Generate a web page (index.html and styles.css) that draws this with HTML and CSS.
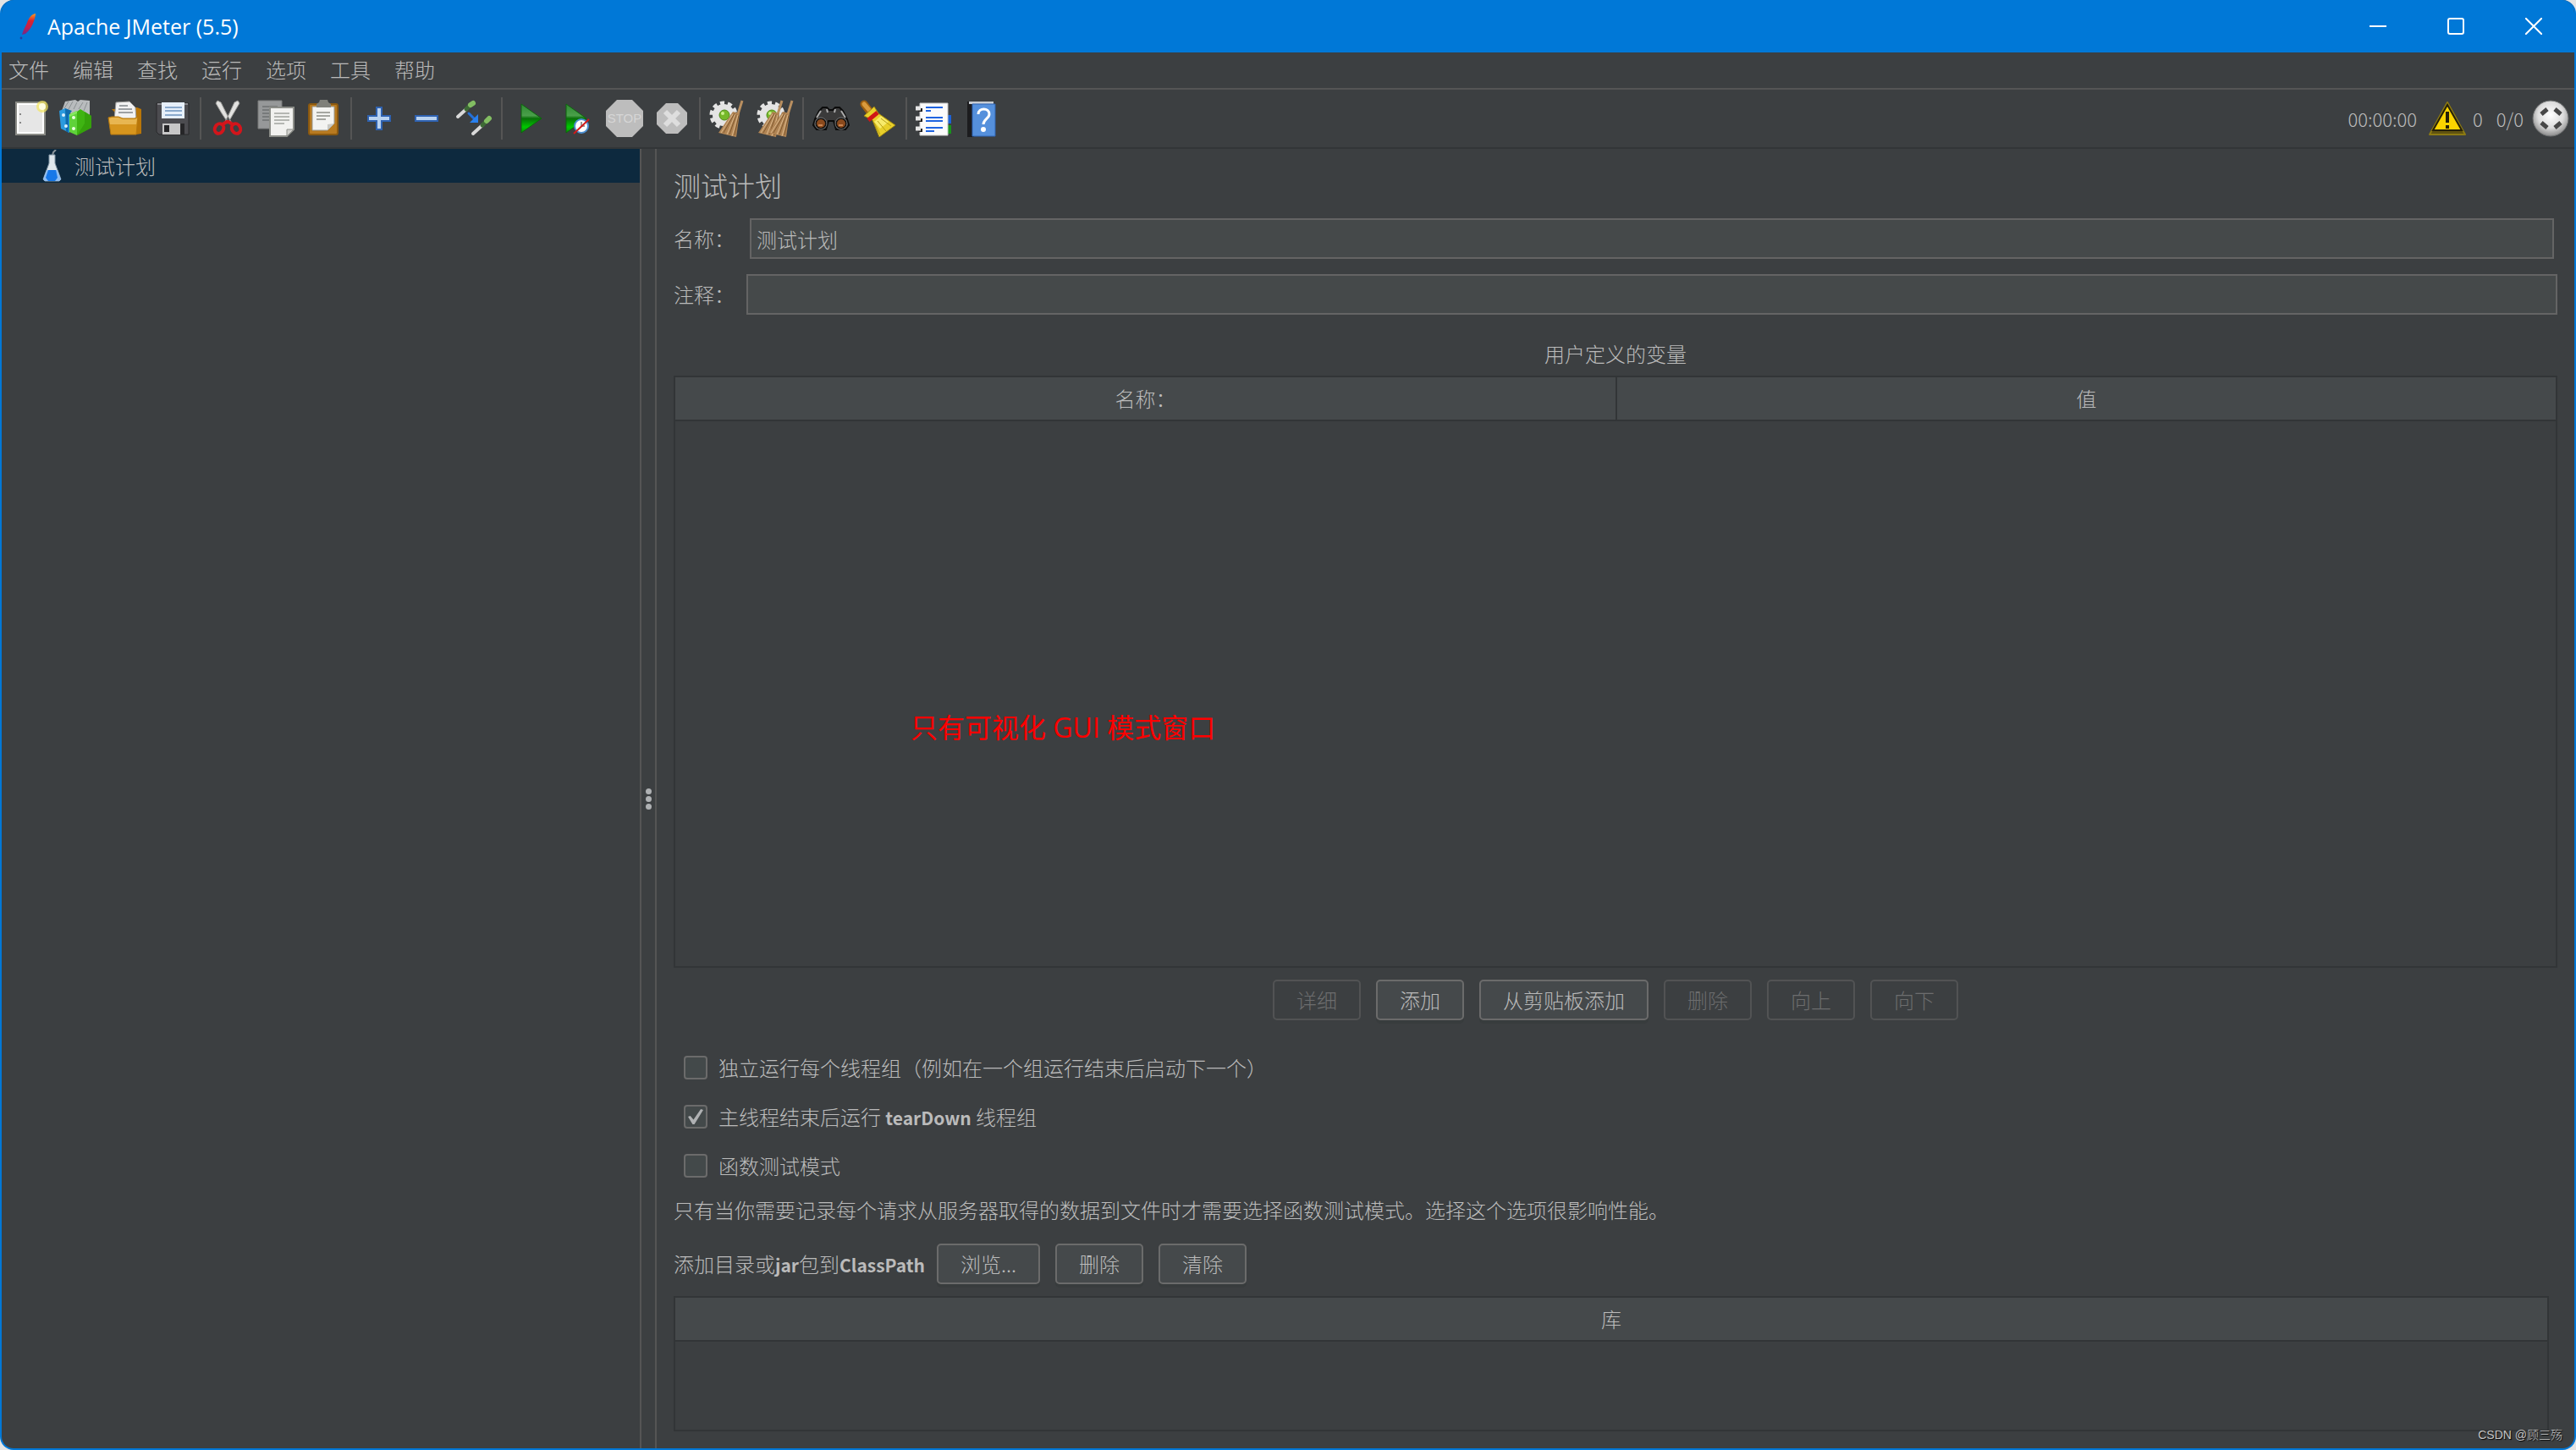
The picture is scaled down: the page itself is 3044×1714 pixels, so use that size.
FILE: index.html
```html
<!DOCTYPE html>
<html lang="zh-CN">
<head>
  <meta charset="UTF-8">
  <meta name="viewport" content="width=device-width, initial-scale=1.0">
  <title>Apache JMeter (5.5)</title>
  <link rel="stylesheet" href="styles.css">
</head>
<body>

<div class="window">
  <header class="titlebar">
    <svg class="feather" viewBox="0 0 22 34">
      <defs>
        <linearGradient id="feather" x1="0" y1="1" x2="0" y2="0">
          <stop offset="0" stop-color="#6d2a8c"/>
          <stop offset=".35" stop-color="#c2204f"/>
          <stop offset=".65" stop-color="#d8232f"/>
          <stop offset="1" stop-color="#f79a23"/>
        </linearGradient>
      </defs>
      <path fill="url(#feather)" d="M20 2c-5 1-8 5-10 11-2 5-5 9-6 14l4-1c5-4 8-9 10-15 1-3 2-6 2-9z"/>
      <circle cx="3" cy="31" r="1.4" fill="#2a3ea0"/>
    </svg>
    <span class="title">Apache JMeter (5.5)</span>
    <div class="window-buttons">
      <button type="button" aria-label="最小化"><svg viewBox="0 0 20 20"><path d="M0 10h20"/></svg></button>
      <button type="button" aria-label="最大化"><svg viewBox="0 0 20 20"><rect x="1" y="1" width="18" height="18" rx="2"/></svg></button>
      <button type="button" aria-label="关闭"><svg viewBox="0 0 20 20"><path d="M0 0l20 20M20 0L0 20"/></svg></button>
    </div>
  </header>

  <nav class="menubar">
    <button type="button">文件</button>
    <button type="button">编辑</button>
    <button type="button">查找</button>
    <button type="button">运行</button>
    <button type="button">选项</button>
    <button type="button">工具</button>
    <button type="button">帮助</button>
  </nav>

  <div class="toolbar">
    <div class="tools">
      <button type="button" aria-label="新建">
        <svg viewBox="0 0 44 44">
          <path fill="#e6e6e6" stroke="#8a8b86" stroke-width="2" d="M5 3h34v38H5z"/>
          <path fill="none" stroke="#fff" stroke-width="2" d="M7 5h30v34H7z"/>
          <path stroke="#888" stroke-width="2" d="M9 17h2M9 27h2"/>
          <circle cx="36" cy="8" r="7" fill="#f4e55c" opacity=".7"/>
          <circle cx="36" cy="8" r="4" fill="#fffde0"/>
        </svg>
      </button>
      <button type="button" aria-label="模板">
        <svg viewBox="0 0 44 44">
          <path fill="#b9bcbe" d="M3 13L7 2l12-2 3 2 3-2 11 1v17L18 17z"/>
          <path stroke="#8b9092" stroke-width="1" fill="none" d="M6 10l5-8M11 11l5-9M17 11l4-8M23 11l5-8M29 13l4-10"/>
          <path fill="#2a9ade" d="M0 13l7-3 5 3v26L2 34z"/>
          <path fill="#0f6cae" d="M7 10l8 3-4 5v21l-3-2z"/>
          <path fill="#5fd23a" d="M12 17l9-4v29l-9-4z"/>
          <path fill="#3fb412" d="M21 14l4-3 13 8v14l-17 9z"/>
          <path fill="#2f9606" d="M30 14l8 5v14l-17 9 9-14z" opacity=".6"/>
          <path fill="#86e860" d="M12 17l9-4v3l-9 4z"/>
          <circle cx="5" cy="18" r="2" fill="#d8eefc"/><circle cx="8" cy="31" r="2" fill="#d8eefc"/>
          <circle cx="17" cy="21" r="2" fill="#eaffdf"/><circle cx="17" cy="34" r="2" fill="#eaffdf"/>
        </svg>
      </button>
      <button type="button" aria-label="打开">
        <svg viewBox="0 0 44 44">
          <path fill="#b97608" d="M6 11h8v-2h22l5 2v29l-6 1z"/>
          <path fill="#f2f2f2" stroke="#9a9a98" stroke-width="1" d="M11 3l16-1 7 7 1 14H9z"/>
          <path stroke="#9da1a4" stroke-width="2" d="M15 7h10M14 11h16M14 15h17"/>
          <path fill="#d6951d" stroke="#b87a10" stroke-width="1" d="M2 21l4-1h8l5 2h14l4-2-2 21H5z"/>
          <path fill="#f0c468" d="M3 22l3-1h8l5 2h14l3-1-1 7H4z" opacity=".7"/>
        </svg>
      </button>
      <button type="button" aria-label="保存">
        <svg viewBox="0 0 44 44">
          <path fill="#4c4c50" stroke="#28282a" stroke-width="1" d="M3 4h38v37H6l-3-3z"/>
          <path fill="#85858a" d="M4 4h36v2H4z"/>
          <path fill="#e6effa" d="M9 3h27v19H9z"/>
          <path stroke="#8aa9cc" stroke-width="2" d="M13 9h20M13 13h20M13 18h20"/>
          <path fill="#c7c7c7" d="M10 28h21v13H10z"/>
          <path fill="#262628" d="M12 30h6v8h-6zM31 28h5v13h-5z"/>
        </svg>
      </button>
      <span class="separator"></span>
      <button type="button" aria-label="剪切">
        <svg viewBox="0 0 44 44">
          <path fill="#e2e2e0" stroke="#9b9b98" d="M9 1l4 2 8 16 4 7-3 2-8-12-7-12zM33 1l-4 2-7 15-4 8 3 2 7-12 7-12z"/>
          <g fill="none" stroke="#d3151b" stroke-width="4">
            <ellipse cx="11" cy="34" rx="5" ry="6" transform="rotate(30 11 34)"/>
            <ellipse cx="31" cy="34" rx="5" ry="6" transform="rotate(-30 31 34)"/>
            <path d="M15 29l5-3h2l5 3"/>
          </g>
          <circle cx="21" cy="23" r="1" fill="#666"/>
        </svg>
      </button>
      <button type="button" aria-label="复制">
        <svg viewBox="0 0 44 44">
          <path fill="#969899" stroke="#7a7c7d" d="M1 1h28v33H1z"/>
          <path stroke="#777a7b" stroke-width="2" d="M6 8h18M6 12h18M6 16h10M6 20h10M6 24h10"/>
          <path fill="#f1f1ef" stroke="#8c8e89" stroke-width="2" d="M15 9h28v26l-8 8H15z"/>
          <path stroke="#b4b6b2" stroke-width="2" d="M20 16h18M20 20h18M20 24h18M20 28h12"/>
          <path fill="#d0d0cc" stroke="#8c8e89" d="M43 35l-8 8v-8z"/>
        </svg>
      </button>
      <button type="button" aria-label="粘贴">
        <svg viewBox="0 0 44 44">
          <rect x="5" y="5" width="34" height="36" rx="2" fill="#b87a20" stroke="#8b5910" stroke-width="2"/>
          <path fill="#f3f3f1" stroke="#999a94" d="M9 8h26v20l-8 8H9z"/>
          <path fill="#7f807a" d="M14 9V5l3-2 1-3h9l1 3 3 2v4z"/>
          <path stroke="#a5a6a1" stroke-width="2" d="M14 15h16M14 19h16M14 23h11"/>
          <path fill="#c9c9c4" d="M35 28l-8 8v-7z"/>
        </svg>
      </button>
      <span class="separator"></span>
      <button type="button" aria-label="展开全部">
        <svg viewBox="0 0 44 44"><path fill="#b9d2f0" stroke="#2f62b0" stroke-width="2" d="M19 9h6v10h10v6H25v10h-6V25H9v-6h10z"/></svg>
      </button>
      <button type="button" aria-label="收起全部">
        <svg viewBox="0 0 44 44"><path fill="#b9d2f0" stroke="#2f62b0" stroke-width="2" d="M9 19h26v6H9z"/></svg>
      </button>
      <button type="button" aria-label="切换">
        <svg viewBox="0 0 44 44" fill="none" stroke-linecap="round">
          <path stroke="#d9d9d9" stroke-width="4" d="M3 20L13 11M21 40l11-10"/>
          <path stroke="#3d6a35" stroke-width="5" d="M13 11l4-4M32 30l4-4"/>
          <path stroke="#82bd62" stroke-width="6" d="M18 6l3-2M37 25l3-3"/>
          <path stroke="#2470d8" stroke-width="3" d="M16 16l7 7"/>
          <path fill="#2880f0" d="M27 17v10H17z"/>
        </svg>
      </button>
      <span class="separator"></span>
      <button type="button" aria-label="启动">
        <svg viewBox="0 0 44 44">
          <defs>
            <linearGradient id="play" x1="0" y1="0" x2="0" y2="1">
              <stop offset="0" stop-color="#2f8a32"/>
              <stop offset=".4" stop-color="#4a9f4a"/>
              <stop offset=".5" stop-color="#086f08"/>
              <stop offset=".8" stop-color="#00c800"/>
              <stop offset="1" stop-color="#078a07"/>
            </linearGradient>
          </defs>
          <path fill="url(#play)" stroke="#0d650d" d="M12 5l24 17-24 17z"/>
        </svg>
      </button>
      <button type="button" aria-label="不停顿开始">
        <svg viewBox="0 0 44 44">
          <path fill="url(#play)" stroke="#0d650d" d="M9 5l24 17L9 39z"/>
          <circle cx="27" cy="31" r="8" fill="#fff" stroke="#4b8ed0" stroke-width="2"/>
          <path fill="none" stroke="#999" stroke-width="2" d="M27 26v5h4"/>
          <path stroke="#d11b1b" stroke-width="2" d="M18 40L36 23"/>
        </svg>
      </button>
      <button type="button" aria-label="停止" disabled>
        <svg viewBox="0 0 44 44">
          <path fill="#bdbdbd" d="M13 0h18l13 13v18L31 44H13L0 31V13z"/>
          <text class="stop-label" x="22" y="27">STOP</text>
        </svg>
      </button>
      <button type="button" aria-label="关闭" disabled>
        <svg viewBox="0 0 44 44">
          <path fill="#bdbdbd" d="M15 4h14l11 11v14L29 40H15L4 29V15z"/>
          <path stroke="#dedede" stroke-width="6" d="M14 14l16 16M30 14L14 30"/>
        </svg>
      </button>
      <span class="separator"></span>
      <button type="button" aria-label="清除">
        <svg viewBox="0 0 44 44">
          <g id="gear">
            <circle cx="17" cy="18" r="13" fill="#e4e4e4"/>
            <circle cx="17" cy="18" r="14" fill="none" stroke="#e4e4e4" stroke-width="5" stroke-dasharray="5 3.8"/>
            <circle cx="18" cy="18" r="6" fill="#76b82a" stroke="#4d8a18"/>
            <circle cx="16" cy="16" r="2" fill="#c9ef8c"/>
          </g>
          <g id="broom">
            <path stroke="#b98f60" stroke-width="3" d="M39 1l-5 16"/>
            <path fill="#b08454" d="M28 14l8 2-4 28-21-5z"/>
            <path stroke="#80592f" d="M30 16L17 39M32 17l-8 24M35 18l-5 24"/>
            <path stroke="#dcb98c" d="M28 17L14 39M31 17l-10 24M34 18l-7 25"/>
          </g>
        </svg>
      </button>
      <button type="button" aria-label="清除全部">
        <svg viewBox="0 0 44 44">
          <use href="#gear"/>
          <use href="#broom" x="-9"/>
          <use href="#broom" x="3"/>
        </svg>
      </button>
      <span class="separator"></span>
      <button type="button" aria-label="查找">
        <svg viewBox="0 0 44 44">
          <path fill="#3a3a3a" stroke="#0b0b0b" stroke-width="2" d="M3 23l5-10 4-4h5l3 3h4l3-3h5l4 4 5 10 2 7-4 5H28l-3-10h-6l-3 10H5l-4-5z"/>
          <path stroke="#aaa" stroke-width="2" d="M10 13l-5 8M34 13l5 8M17 11l1 4M27 11l-1 4"/>
          <circle cx="10" cy="28" r="7" fill="#111" stroke="#777"/>
          <circle cx="34" cy="28" r="7" fill="#111" stroke="#777"/>
          <circle cx="10" cy="28" r="5" fill="#8b4a1d"/>
          <circle cx="34" cy="28" r="5" fill="#8b4a1d"/>
          <path stroke="#c98452" stroke-width="2" d="M7 30h5M31 30h5"/>
        </svg>
      </button>
      <button type="button" aria-label="重置搜索">
        <svg viewBox="0 0 44 44">
          <path stroke="#9c5f10" stroke-width="9" stroke-linecap="round" d="M5 5l6 8"/>
          <path stroke="#d99a3c" stroke-width="5" stroke-linecap="round" d="M5 5l6 7"/>
          <path fill="#e8cf2a" stroke="#9d8510" d="M5 19l12-11 5 8 20 14-19 14-8-20z"/>
          <path fill="#f7ea6a" d="M17 26l8-7 9 7-10 8z"/>
          <path stroke="#b79f14" d="M17 27l7 14M21 25l10 12M25 22l12 9"/>
          <path stroke="#cf1616" stroke-width="5" d="M10 24l11-9"/>
        </svg>
      </button>
      <span class="separator"></span>
      <button type="button" aria-label="函数助手对话框">
        <svg viewBox="0 0 44 44">
          <path fill="#1b62d8" d="M36 18h6v10h-6z"/><path fill="#18941c" d="M36 30h6v10h-6z"/>
          <path fill="#fbfbfb" stroke="#c9c9c9" d="M5 4h33v38H5z"/>
          <path stroke="#2064e0" stroke-width="2" d="M12 9h20M12 13h6M12 21h20M12 25h20M12 33h20M12 37h10"/>
          <path stroke="#222" stroke-width="4" d="M3 12h5M3 24h5M3 36h5"/>
          <path stroke="#e6e6e6" stroke-width="5" d="M0 10h6M0 22h6M0 34h6"/>
        </svg>
      </button>
      <button type="button" aria-label="帮助">
        <svg viewBox="0 0 44 44">
          <path fill="#1c1c1e" d="M5 2h8v42H5z"/>
          <path fill="#c8ccd2" d="M7 2h29v3H7z"/>
          <path fill="#5590dc" stroke="#2f65b4" d="M11 5h27v38H11z"/>
          <path fill="none" stroke="#fff" stroke-width="3" d="M18 17c0-8 13-8 13 0 0 5-7 6-7 12"/>
          <circle cx="24" cy="35" r="3" fill="#fff"/>
        </svg>
      </button>
    </div>
    <div class="status">
      <span class="timer">00:00:00</span>
      <svg viewBox="0 0 44 44">
        <path fill="#5f5210" stroke="#8c7a12" stroke-width="2" stroke-linejoin="round" d="M22 3l21 38H1z"/>
        <path fill="#fbd400" stroke="#252008" stroke-width="2" d="M22 6l17 30H5z"/>
        <path stroke="#252008" stroke-width="4" d="M22 14v13M22 30v4"/>
      </svg>
      <span class="errors">0</span>
      <span class="threads">0/0</span>
      <svg viewBox="0 0 44 44">
        <defs>
          <radialGradient id="knob" cx=".5" cy=".4" r=".6">
            <stop offset="0" stop-color="#fff"/>
            <stop offset=".6" stop-color="#dcdcdc"/>
            <stop offset="1" stop-color="#8a8a8a"/>
          </radialGradient>
        </defs>
        <circle cx="22" cy="22" r="21" fill="url(#knob)" stroke="#6c6e6f"/>
        <path stroke="#474747" stroke-width="5" d="M11 17l7-6M27 11l7 6M11 27l7 6M27 33l7-6"/>
      </svg>
    </div>
  </div>

  <div class="content">
    <aside class="tree">
      <div class="tree-item">
        <svg viewBox="0 0 24 38">
          <path fill="none" stroke="#8a949a" stroke-width="2" d="M12 7l1-4 3-3"/>
          <path fill="#dfe7ec" stroke="#8397a5" d="M8 6h7v10l7 19-2 2H3l-2-2 7-19z"/>
          <path fill="#8fbdf2" d="M5 24h13l4 11-2 2H3l-2-2z"/>
          <path fill="#1878e8" d="M7 24h9l2 9-3 4H7l-3-4z"/>
        </svg>
        <span>测试计划</span>
      </div>
    </aside>
    <div class="splitter"><i></i><i></i><i></i></div>

    <main class="panel">
      <h1>测试计划</h1>
      <div class="field field-name">
        <label for="name">名称：</label>
        <input type="text" id="name" value="测试计划">
      </div>
      <div class="field">
        <label for="comments">注释：</label>
        <input type="text" id="comments">
      </div>

      <section class="variables">
        <h2>用户定义的变量</h2>
        <div class="table-box">
          <table>
            <thead>
              <tr><th>名称：</th><th>值</th></tr>
            </thead>
          </table>
          <p class="note">只有可视化 GUI 模式窗口</p>
        </div>
        <div class="buttons">
          <button type="button" class="btn" disabled>详细</button>
          <button type="button" class="btn">添加</button>
          <button type="button" class="btn">从剪贴板添加</button>
          <button type="button" class="btn" disabled>删除</button>
          <button type="button" class="btn" disabled>向上</button>
          <button type="button" class="btn" disabled>向下</button>
        </div>
      </section>

      <div class="options">
        <label><input type="checkbox"><span>独立运行每个线程组（例如在一个组运行结束后启动下一个）</span></label>
        <label><input type="checkbox" checked><span>主线程结束后运行 <b>tearDown</b> 线程组</span></label>
        <label><input type="checkbox"><span>函数测试模式</span></label>
      </div>
      <p class="hint">只有当你需要记录每个请求从服务器取得的数据到文件时才需要选择函数测试模式。选择这个选项很影响性能。</p>

      <div class="classpath">
        <span class="classpath-label">添加目录或<b>jar</b>包到<b>ClassPath</b></span>
        <button type="button" class="btn">浏览...</button>
        <button type="button" class="btn">删除</button>
        <button type="button" class="btn">清除</button>
      </div>
      <div class="table-box library">
        <table>
          <thead>
            <tr><th>库</th></tr>
          </thead>
        </table>
      </div>
    </main>
  </div>
  <span class="watermark">CSDN @顾三殇</span>
</div>

</body>
</html>
```

FILE: styles.css
```css
* {
  box-sizing: border-box;
}

body {
  margin: 0;
  background-color: #e4e4e4;
  color: #bbbbbb;
  font-family: "Noto Sans CJK SC", sans-serif;
  font-size: 24px;
  font-weight: 300;
  line-height: 32px;
}

button,
input {
  font: inherit;
  color: inherit;
}

button {
  padding: 0;
  border: none;
  background: none;
}

svg {
  display: block;
}

h1,
h2,
p {
  margin: 0;
  font-weight: inherit;
}

b {
  font-size: 21px;
  font-weight: bold;
}

.window {
  position: relative;
  display: flex;
  flex-direction: column;
  min-height: 100vh;
  border: 2px solid #0078d7;
  border-top: none;
  border-radius: 16px;
  background-color: #3c3f41;
  overflow: hidden;
}

/* title bar */
.titlebar {
  display: flex;
  align-items: center;
  height: 62px;
  padding: 0 2px 0 20px;
  background-color: #0078d7;
  color: #fff;
}

.feather {
  width: 22px;
  height: 34px;
}

.title {
  flex: 1;
  margin-left: 12px;
  font-family: "Open Sans", sans-serif;
  font-size: 25px;
  font-weight: 400;
}

.window-buttons {
  display: flex;
}

.window-buttons button {
  display: flex;
  justify-content: center;
  align-items: center;
  width: 92px;
  height: 62px;
}

.window-buttons svg {
  width: 20px;
  height: 20px;
  fill: none;
  stroke: #fff;
  stroke-width: 2;
}

/* menu */
.menubar {
  display: flex;
  align-items: center;
  gap: 28px;
  height: 44px;
  padding: 0 0 2px 8px;
  border-bottom: 2px solid #555555;
}

/* toolbar */
.toolbar {
  display: flex;
  justify-content: space-between;
  align-items: center;
  height: 70px;
  padding: 0 6px 0 12px;
  border-bottom: 2px solid #323537;
}

.tools,
.status {
  display: flex;
  align-items: center;
}

.tools button + button {
  margin-left: 12px;
}

.toolbar svg {
  width: 44px;
  height: 44px;
}

.separator {
  width: 2px;
  height: 50px;
  margin: 0 10px;
  background-color: #555555;
}

.stop-label {
  fill: #d6d6d6;
  font-family: "Liberation Sans", sans-serif;
  font-size: 15px;
  text-anchor: middle;
}

.status {
  font-size: 22px;
}

.timer {
  margin-right: 14px;
}

.errors {
  margin: 0 16px 0 8px;
}

.threads {
  margin-right: 10px;
}

/* tree and splitter */
.content {
  display: flex;
  flex: 1;
}

.tree {
  width: 756px;
  border-right: 2px solid #555555;
}

.tree-item {
  display: flex;
  align-items: center;
  gap: 14px;
  height: 40px;
  padding-left: 48px;
  background-color: #0d293e;
}

.tree-item svg {
  width: 24px;
  height: 38px;
}

.splitter {
  display: flex;
  flex-direction: column;
  justify-content: center;
  align-items: center;
  gap: 2px;
  width: 18px;
  border-right: 2px solid #555555;
}

.splitter i {
  width: 7px;
  height: 7px;
  border-radius: 50%;
  background-color: #afb1b3;
}

/* test plan panel */
.panel {
  display: flex;
  flex: 1;
  flex-direction: column;
  padding: 18px 20px 20px;
}

h1 {
  font-size: 32px;
  line-height: 48px;
}

.field {
  display: flex;
  align-items: center;
  margin-top: 18px;
}

.field-name {
  margin-top: 16px;
  padding-right: 4px;
}

.field label {
  width: 86px;
}

.field-name label {
  width: 90px;
}

.field input {
  flex: 1;
  height: 48px;
  padding: 0 6px;
  border: 2px solid #646464;
  background-color: #45494a;
  outline: none;
}

.variables {
  display: flex;
  flex: 1;
  flex-direction: column;
  margin-top: 30px;
}

h2 {
  margin-bottom: 10px;
  font-size: 24px;
  text-align: center;
}

.table-box {
  position: relative;
  flex: 1;
  border: 2px solid #323537;
}

table {
  width: 100%;
  border-spacing: 0;
  table-layout: fixed;
}

th {
  height: 52px;
  padding: 0;
  border-bottom: 2px solid #323537;
  background-color: #45494b;
  font-weight: inherit;
}

th + th {
  border-left: 2px solid #323537;
}

/* sits over the empty table */
.note {
  position: absolute;
  top: 390px;
  left: 278px;
  color: #ff0000;
  font-family: "Open Sans", "Noto Sans CJK SC", sans-serif;
  font-size: 32px;
  font-weight: 400;
  line-height: 48px;
}

.buttons {
  display: flex;
  justify-content: center;
  gap: 18px;
  margin-top: 14px;
}

.btn {
  height: 48px;
  padding: 0 26px;
  border: 2px solid #6b6b6b;
  border-radius: 5px;
  background-color: #45494b;
  box-shadow: 0 4px #383c3d;
}

.btn:disabled {
  border-color: #525354;
  background: none;
  box-shadow: none;
  color: #6c6d6e;
}

.options {
  display: flex;
  flex-direction: column;
  gap: 26px;
  margin-top: 40px;
  padding-left: 12px;
}

.options label {
  display: flex;
  align-items: center;
  gap: 13px;
  height: 32px;
}

.options input {
  appearance: none;
  display: flex;
  justify-content: center;
  align-items: center;
  width: 28px;
  height: 28px;
  margin: 0;
  border: 2px solid #6b6b6b;
  border-radius: 4px;
  background-color: #43494a;
}

.options input:checked::before {
  content: "";
  width: 18px;
  height: 18px;
  background-color: #afb1b3;
  clip-path: polygon(0 50%, 15% 44%, 36% 70%, 84% 0, 100% 6%, 42% 100%, 30% 100%);
}

.hint {
  margin-top: 20px;
}

.classpath {
  display: flex;
  align-items: center;
  gap: 18px;
  margin-top: 24px;
}

.classpath-label {
  margin-right: -4px;
}

.library {
  flex: none;
  height: 160px;
  margin: 14px 10px 0 0;
}

.watermark {
  position: absolute;
  right: 14px;
  bottom: 4px;
  color: #c4c4c4;
  font-family: "Liberation Sans", "Noto Sans CJK SC", sans-serif;
  font-size: 14px;
  line-height: 24px;
  text-shadow: 1px 1px 1px #000;
}
```
